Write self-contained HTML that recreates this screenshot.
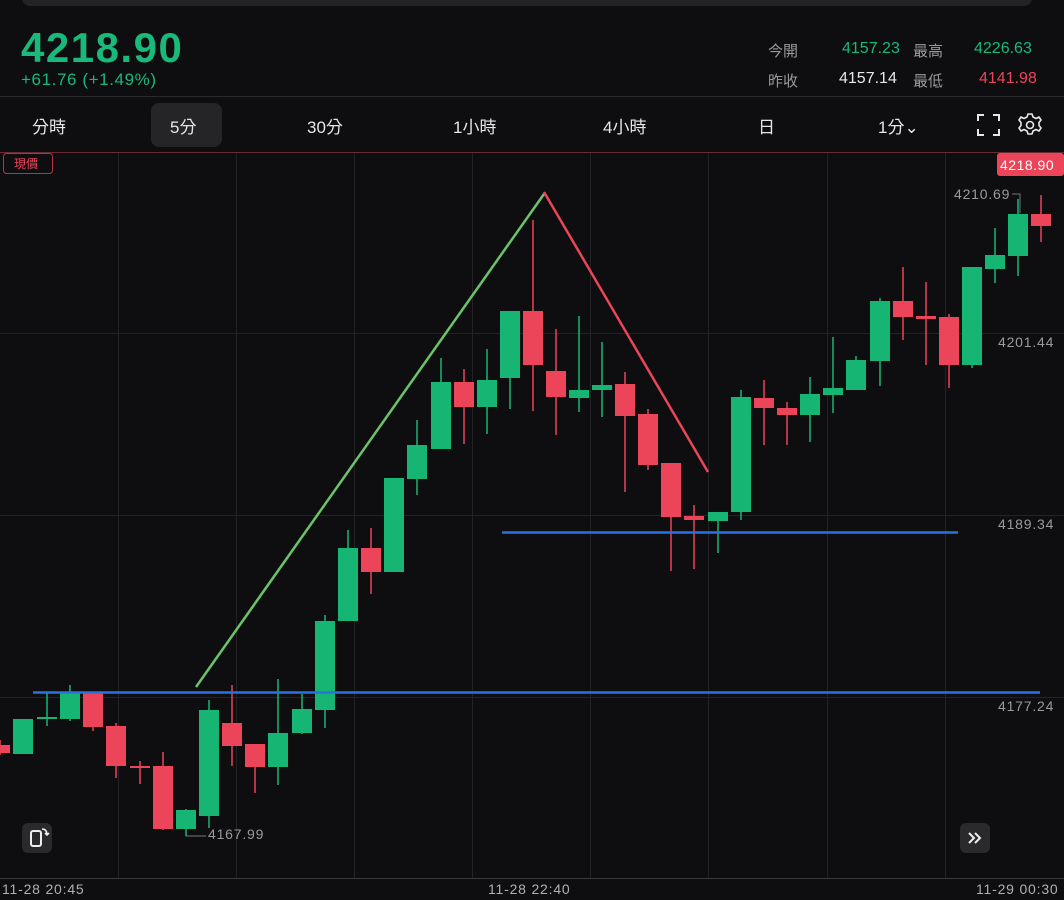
<!DOCTYPE html>
<html><head><meta charset="utf-8"><style>
body{margin:0;width:1064px;height:900px;background:#0e0e10;overflow:hidden;font-family:"Liberation Sans","Noto Sans CJK TC",sans-serif;color:#ddd;position:relative}
.a{position:absolute;white-space:nowrap}
.t{font-size:17px;color:#e6e6e6;top:113px}
</style></head><body>
<div class="a" style="left:22px;top:-10px;width:1010px;height:16px;background:#232326;border-radius:8px"></div>
<div class="a" style="left:21px;top:24px;font-size:42px;font-weight:bold;color:#18b97a;letter-spacing:1.5px">4218.90</div>
<div class="a" style="left:21px;top:70px;font-size:17px;color:#18b97a;letter-spacing:0.6px">+61.76 (+1.49%)</div>
<div class="a" style="left:768px;top:40px;font-size:15px;color:#9a9a9e">今開</div>
<div class="a" style="left:842px;top:40px;font-size:16px;color:#18b97a">4157.23</div>
<div class="a" style="left:913px;top:40px;font-size:15px;color:#9a9a9e">最高</div>
<div class="a" style="left:974px;top:40px;font-size:16px;color:#18b97a">4226.63</div>
<div class="a" style="left:768px;top:70px;font-size:15px;color:#9a9a9e">昨收</div>
<div class="a" style="left:839px;top:70px;font-size:16px;color:#e8e8e8">4157.14</div>
<div class="a" style="left:913px;top:70px;font-size:15px;color:#9a9a9e">最低</div>
<div class="a" style="left:979px;top:70px;font-size:16px;color:#ec4459">4141.98</div>
<div class="a" style="left:0;top:96px;width:1064px;height:1px;background:#2a2a2d"></div>
<div class="a" style="left:151px;top:103px;width:71px;height:44px;background:#252528;border-radius:8px"></div>
<div class="a t" style="left:32px">分時</div>
<div class="a t" style="left:170px">5分</div>
<div class="a t" style="left:307px">30分</div>
<div class="a t" style="left:453px">1小時</div>
<div class="a t" style="left:603px">4小時</div>
<div class="a t" style="left:758px">日</div>
<div class="a t" style="left:878px">1分⌄</div>
<svg class="a" style="left:0;top:0" width="1064" height="900">
<g stroke="#e6e6e6" stroke-width="2" fill="none">
<path d="M978 121v-6h6M993 115h6v6M999 129v6h-6M984 135h-6v-6"/>
<path d="M1028 114h4l1 3 3 1.5 3-1.5 2 3-2 2.5v3l2 2.5-2 3-3-1.5-3 1.5-1 3h-4l-1-3-3-1.5-3 1.5-2-3 2-2.5v-3l-2-2.5 2-3 3 1.5 3-1.5z" stroke-width="1.6" stroke-linejoin="round"/><circle cx="1030" cy="125" r="3.5" stroke-width="1.6"/>
</g>
<line x1="0" y1="152.5" x2="1064" y2="152.5" stroke="#6a2a33"/>
<g stroke="#232326" stroke-width="1">
<path d="M118.5 153V878M236.5 153V878M354.5 153V878M472.5 153V878M590.5 153V878M708.5 153V878M827.5 153V878M945.5 153V878M0 333.5H1064M0 515.5H1064M0 697.5H1064"/>
</g>
<line x1="0" y1="878.5" x2="1064" y2="878.5" stroke="#3a3a3d"/>
<rect x="3.5" y="153.5" width="49" height="20" rx="3" fill="none" stroke="#b8323f"/>
<text x="14" y="168" font-size="12" fill="#ec4459" font-family="Liberation Sans,Noto Sans CJK TC,sans-serif">現價</text>
<rect x="997" y="153" width="67" height="23" rx="3" fill="#ec4459"/>
<text x="1000" y="170" font-size="14" fill="#fff" font-family="Liberation Sans,sans-serif" letter-spacing="0.5">4218.90</text>
<g font-size="14" fill="#9a9a9e" font-family="Liberation Sans,sans-serif" letter-spacing="0.8">
<text x="998" y="347">4201.44</text><text x="998" y="529">4189.34</text><text x="998" y="711">4177.24</text>
<text x="954" y="199">4210.69</text><text x="208" y="839">4167.99</text>
<text x="2" y="894" fill="#b0b0b4">11-28 20:45</text><text x="488" y="894" fill="#b0b0b4">11-28 22:40</text><text x="976" y="894" fill="#b0b0b4">11-29 00:30</text>
</g>
<path d="M1012 194h8v19M186 830v6h20" stroke="#777" fill="none"/>
<g stroke-width="1.5">
<g stroke="#ec4459"><path d="M0 740V755M93 693V731M116 723V778M140 761V784M163 752V830M232 685V766M255 744V793M371 528V594M464 369V444M533 220V411M556 329V435M625 372V492M648 409V470M671 463V571M694 505V569M764 380V445M787 402V445M903 267V340M926 282V365M949 314V388M1041 195V242"/></g>
<g stroke="#16b574"><path d="M23 719V754M47 693V726M70 685V721M186 809V836M209 700V828M278 679V785M302 694V734M325 615V728M348 530V621M394 478V572M417 420V495M441 358V449M487 349V434M510 311V409M579 316V412M602 342V417M718 512V553M741 390V520M810 377V442M833 337V413M856 356V390M880 298V386M972 267V368M995 228V283M1018 199V276"/></g>
</g>
<g fill="#ec4459">
<rect x="-10" y="745" width="20" height="8"/><rect x="83" y="693" width="20" height="34"/><rect x="106" y="726" width="20" height="40"/><rect x="130" y="766" width="20" height="2"/><rect x="153" y="766" width="20" height="63"/><rect x="222" y="723" width="20" height="23"/><rect x="245" y="744" width="20" height="23"/><rect x="361" y="548" width="20" height="24"/><rect x="454" y="382" width="20" height="25"/><rect x="523" y="311" width="20" height="54"/><rect x="546" y="371" width="20" height="26"/><rect x="615" y="384" width="20" height="32"/><rect x="638" y="414" width="20" height="51"/><rect x="661" y="463" width="20" height="54"/><rect x="684" y="516" width="20" height="4"/><rect x="754" y="398" width="20" height="10"/><rect x="777" y="408" width="20" height="7"/><rect x="893" y="301" width="20" height="16"/><rect x="916" y="316" width="20" height="3"/><rect x="939" y="317" width="20" height="48"/><rect x="1031" y="214" width="20" height="12"/>
</g>
<g fill="#16b574">
<rect x="13" y="719" width="20" height="35"/><rect x="37" y="717" width="20" height="2"/><rect x="60" y="693" width="20" height="26"/><rect x="176" y="810" width="20" height="19"/><rect x="199" y="710" width="20" height="106"/><rect x="268" y="733" width="20" height="34"/><rect x="292" y="709" width="20" height="24"/><rect x="315" y="621" width="20" height="89"/><rect x="338" y="548" width="20" height="73"/><rect x="384" y="478" width="20" height="94"/><rect x="407" y="445" width="20" height="34"/><rect x="431" y="382" width="20" height="67"/><rect x="477" y="380" width="20" height="27"/><rect x="500" y="311" width="20" height="67"/><rect x="569" y="390" width="20" height="8"/><rect x="592" y="385" width="20" height="5"/><rect x="708" y="512" width="20" height="9"/><rect x="731" y="397" width="20" height="115"/><rect x="800" y="394" width="20" height="21"/><rect x="823" y="388" width="20" height="7"/><rect x="846" y="360" width="20" height="30"/><rect x="870" y="301" width="20" height="60"/><rect x="962" y="267" width="20" height="98"/><rect x="985" y="255" width="20" height="14"/><rect x="1008" y="214" width="20" height="42"/>
</g>
<line x1="196" y1="687" x2="544" y2="194" stroke="#6cc46a" stroke-width="2.5"/>
<line x1="544" y1="192" x2="708" y2="472" stroke="#ec4459" stroke-width="2.5"/>
<line x1="33" y1="692.5" x2="1040" y2="692.5" stroke="#2a72e0" stroke-width="2.5"/>
<line x1="502" y1="532.5" x2="958" y2="532.5" stroke="#2a72e0" stroke-width="2.5"/>
<rect x="22" y="823" width="30" height="30" rx="6" fill="#2a2a2d"/>
<rect x="31" y="831" width="10" height="15" rx="2" fill="none" stroke="#eee" stroke-width="2"/>
<path d="M42 829q5 0 5 6M45 833l2 2 2-2" stroke="#eee" stroke-width="1.6" fill="none"/>
<rect x="960" y="823" width="30" height="30" rx="6" fill="#2a2a2d"/>
<path d="M969 833l5 5-5 5M975 833l5 5-5 5" stroke="#eee" stroke-width="2" fill="none"/>
</svg>
</body></html>
